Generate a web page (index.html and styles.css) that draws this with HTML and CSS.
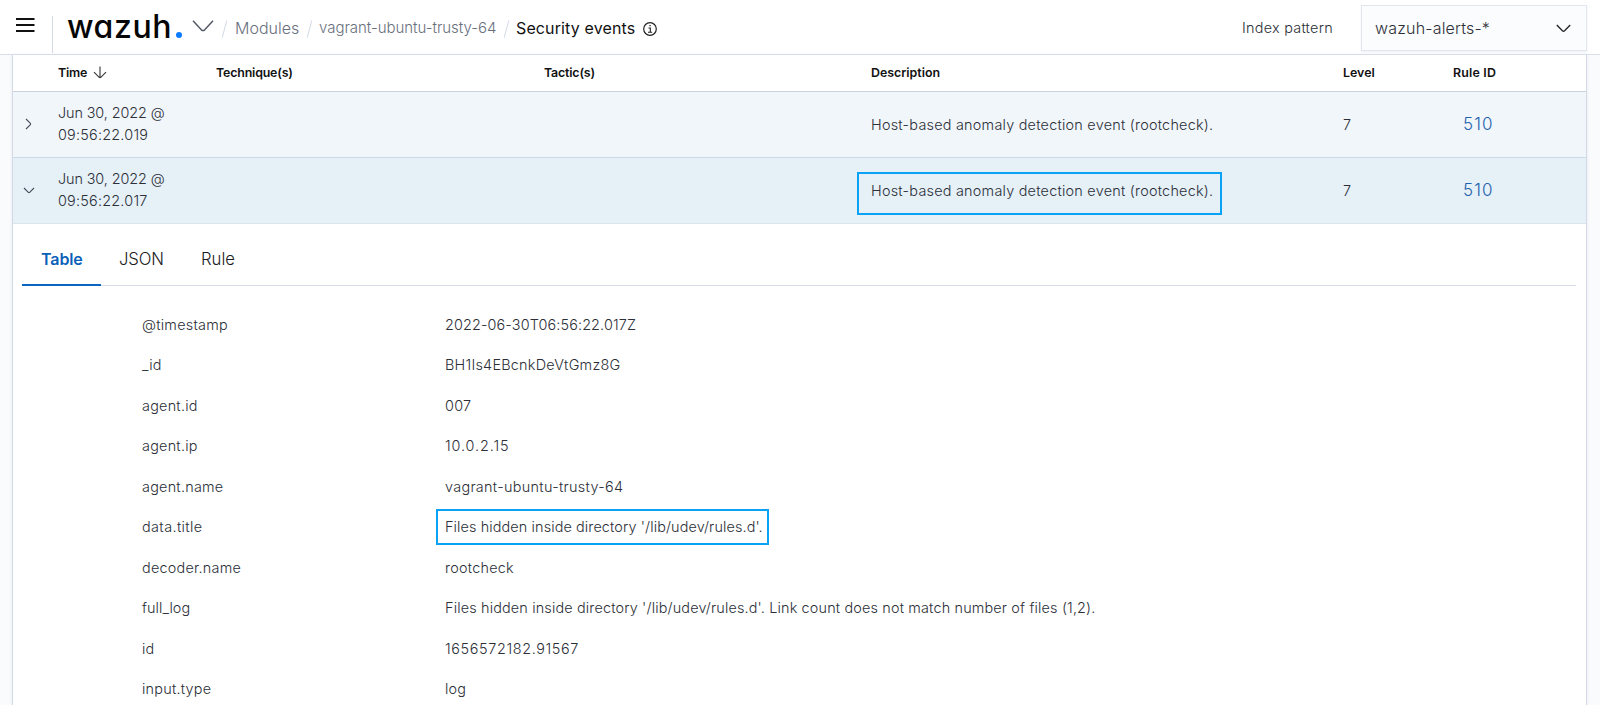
FILE: index.html
```html
<!DOCTYPE html>
<html lang="en">
<head>
<meta charset="utf-8">
<title>Wazuh - Security events</title>
<link rel="stylesheet" href="styles.css">
</head>
<body>
<header class="topbar">
  <button class="menu" aria-label="Menu"><svg width="20" height="16" viewBox="0 0 20 16"><path d="M0 2h18.5M0 8h18.5M0 14h18.5" stroke="#111" stroke-width="2"/></svg></button>
  <div class="brand"><span class="logo">wazuh</span><span class="dot"></span></div>
  <svg class="brand-chev" width="22" height="13" viewBox="0 0 22 13"><path d="M1 .8 9.3 9.8Q11 11.2 12.7 9.8L21 .8" fill="none" stroke="#535966" stroke-width="1.5"/></svg>
  <nav class="crumbs">
    <i class="slash"></i><span class="c-mod">Modules</span>
    <i class="slash"></i><span class="c-agent">vagrant-ubuntu-trusty-64</span>
    <i class="slash"></i><span class="c-page">Security events</span>
    <svg class="info" width="14" height="14" viewBox="0 0 14 14" fill="none" stroke="#222"><circle cx="7" cy="7" r="6.3" stroke-width="1.2"/><path d="M5.5 6h1.8v4M5 10.2h4.2" stroke-width="1.1"/><path d="M6.4 3.7h1.3" stroke-width="1.3"/></svg>
  </nav>
  <span class="ip-label">Index pattern</span>
  <div class="select"><span>wazuh-alerts-*</span><svg width="15" height="9" viewBox="0 0 15 9"><path d="M.8 1 6.4 6.8Q7.5 7.7 8.6 6.8L14.2 1" fill="none" stroke="#222" stroke-width="1.3"/></svg></div>
</header>
<main class="panel">
  <div class="row head">
    <span></span>
    <span class="sort"><span class="tight">Time</span><svg width="14" height="13" viewBox="0 0 14 13"><path d="M7 .5v11.2M1 6.2l5.2 5.2q.8.6 1.6 0L13 6.2" fill="none" stroke="#333" stroke-width="1.1"/></svg></span>
    <span class="tight">Technique(s)</span><span class="tight">Tactic(s)</span><span>Description</span><span>Level</span><span class="h-rule">Rule ID</span>
  </div>
  <div class="row event">
    <svg class="arrow" width="7" height="12" viewBox="0 0 7 12"><path d="M1 1l4.4 4.3q.5.7 0 1.4L1 11" fill="none" stroke="#444c58" stroke-width="1.1"/></svg>
    <span class="time"><span class="date">Jun 30, 2022 @</span><br>09:56:22.019</span><span></span><span></span>
    <span class="desc">Host-based anomaly detection event (rootcheck).</span><span class="lvl">7</span><a class="rule">510</a>
  </div>
  <div class="row event open">
    <svg class="arrow" width="12" height="7" viewBox="0 0 12 7"><path d="M1 1l4.3 4.4q.7.5 1.4 0L11 1" fill="none" stroke="#444c58" stroke-width="1.1"/></svg>
    <span class="time"><span class="date">Jun 30, 2022 @</span><br>09:56:22.017</span><span></span><span></span>
    <span class="desc marked">Host-based anomaly detection event (rootcheck).</span><span class="lvl">7</span><a class="rule">510</a>
  </div>
  <div class="tabs"><span class="tab active">Table</span><span class="tab json">JSON</span><span class="tab">Rule</span></div>
  <dl class="details">
    <dt>@timestamp</dt><dd class="stamp">2022-06-30T06:56:22.017Z</dd>
    <dt>_id</dt><dd class="ident">BH1Is4EBcnkDeVtGmz8G</dd>
    <dt>agent.id</dt><dd>007</dd>
    <dt>agent.ip</dt><dd class="address">10.0.2.15</dd>
    <dt>agent.name</dt><dd class="agent">vagrant-ubuntu-trusty-64</dd>
    <dt class="wide">data.title</dt><dd class="marked-title">Files hidden inside directory '/lib/udev/rules.d'.</dd>
    <dt>decoder.name</dt><dd class="decoder">rootcheck</dd>
    <dt class="snug">full_log</dt><dd class="log">Files hidden inside directory '/lib/udev/rules.d'. Link count does not match number of files (1,2).</dd>
    <dt>id</dt><dd class="number">1656572182.91567</dd>
    <dt>input.type</dt><dd>log</dd>
  </dl>
</main>
</body>
</html>
```
FILE: styles.css
```css
*, *::after { box-sizing: border-box; }
body { margin: 0; height: 705px; overflow: hidden; background: #fafbfd; font-family: Inter, "Liberation Sans", sans-serif; color: #2c2f37; font-size: 14.4px; font-weight: 300; white-space: nowrap; }
.topbar { height: 55px; background: #fff; border-bottom: 1px solid #d9dfe9; display: flex; align-items: flex-start; }
.menu { border: 0; background: none; padding: 15px 0 0 16px; width: 52px; height: 34px; text-align: left; line-height: 0; }
.brand { display: flex; align-items: flex-start; border-left: 1px solid #d3dae6; margin-top: 16px; height: 37px; padding-left: 14px; width: 140px; }
.logo { font-size: 32px; font-weight: 550; line-height: 36px; color: #060606; font-feature-settings: "cv11"; letter-spacing: .6px; margin-top: -7px; width: 109px; }
.dot { width: 6px; height: 6px; border-radius: 50%; background: #0a7cff; margin-top: 16px; }
.brand-chev { margin-top: 20px; }
.crumbs { display: flex; align-items: center; height: 55px; color: #69707d; font-size: 16px; }
.slash { width: 1px; height: 18px; background: #d3dae6; transform: rotate(15deg); margin: 3px 9px 0 10px; }
.c-mod { width: 65px; padding-left: 1px; }
.c-agent { width: 177px; font-size: 15px; letter-spacing: -.03px; }
.c-page { width: 119px; color: #111; font-weight: 400; letter-spacing: .13px; }
.info { margin: 2px 0 0 8px; }
.ip-label { margin-left: auto; width: 119px; line-height: 55px; letter-spacing: .26px; }
.select { margin: 5px 13px 0 0; width: 226px; height: 46px; background: #fbfcfd; border: 1px solid #e2e6ef; box-shadow: 0 1px 2px #d3dae677; display: flex; align-items: center; justify-content: space-between; padding: 0 15px 0 13px; font-size: 16px; letter-spacing: .18px; }
.panel { margin: 0 13px 0 12px; height: 650px; background: #fff; border: solid #d3dae6; border-width: 0 1px; box-shadow: 0 0 3px #d3dae688; }
.row { display: grid; grid-template-columns: 45px 158px 328px 327px 472px 110px 1fr; align-items: center; }
.head { height: 37px; border-bottom: 1px solid #cbd2df; font-size: 12.4px; font-weight: 600; color: #111; padding-bottom: 2px; }
.tight { letter-spacing: -.17px; }
.h-rule { letter-spacing: .2px; }
.sort { display: flex; align-items: center; gap: 6px; }
.event { height: 66px; padding-bottom: 1px; background: #f1f6fb; border-bottom: 1px solid #cdd8e6; }
.event.open { background: #e5f0f7; border-bottom-color: #dbe3ef; }
.arrow { justify-self: center; margin-right: 14px; }
.time { line-height: 22px; letter-spacing: .23px; }
.date { letter-spacing: -.1px; }
.desc { letter-spacing: .24px; }
.marked { position: relative; }
.marked::after, .marked-title::after { content: ""; position: absolute; border: 2px solid #0aa2f5; }
.marked::after { left: -14px; top: -10px; width: 365px; height: 43px; }
.rule { padding: 0 0 1px 10px; font-size: 17px; letter-spacing: 1.1px; color: #1f62ad; }
.tabs { margin: 0 10px 0 9px; height: 62px; border-bottom: 1px solid #d8dde8; display: flex; font-size: 16.7px; color: #1a1c21; }
.tab { line-height: 71px; }
.active { width: 79px; height: 62px; padding-left: 19px; border-bottom: 2px solid #0b64c0; color: #0b5fb8; font-size: 16px; font-weight: 600; letter-spacing: -.1px; }
.json { padding-left: 18px; width: 100px; letter-spacing: -.1px; }
.details { margin: 18px 0 0 129px; display: grid; grid-template-columns: 303px 1fr; grid-auto-rows: 40.5px; align-items: center; letter-spacing: .24px; }
dd { margin: 0; }
.stamp { letter-spacing: .13px; }
.ident { letter-spacing: .25px; }
.address { letter-spacing: .9px; }
.agent { letter-spacing: .31px; }
.wide { letter-spacing: .4px; }
.snug { letter-spacing: .07px; }
.log { letter-spacing: .165px; }
.number { letter-spacing: .64px; }
.marked-title { position: relative; letter-spacing: .12px; }
.marked-title::after { left: -9px; top: -9px; width: 333px; height: 36px; }
```
